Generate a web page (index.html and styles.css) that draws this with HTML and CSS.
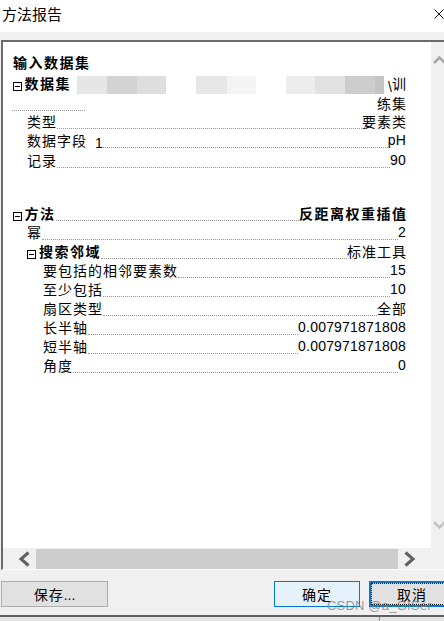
FILE: index.html
```html
<!DOCTYPE html>
<html>
	<head>
		<meta charset="utf-8">
		<link rel="stylesheet" href="styles.css">
	</head>
	<body>
		<div class="titlebar">
			<span class="title">方法报告</span>
			<svg class="close" width="10" height="10" viewBox="0 0 10 10"><path d="M0.5 0.5L9.5 9.5M9.5 0.5L0.5 9.5" stroke="#1a1a1a" stroke-width="1"/></svg>
		</div>
		<div class="band"></div>

		<div class="frame">
			<div class="view">
				<div class="report">
					<div class="row heading">输入数据集</div>

					<div class="dataset">
						<div class="row first">
							<span class="toggle"></span>
							<span class="lbl bold">数据集</span>
							<span class="blur">
								<i style="width:30px;background:#e6e6e6"></i>
								<i style="width:30px;background:#d3d3d3"></i>
								<i style="width:29px;background:#dedede"></i>
								<i style="width:30px;background:#fff"></i>
								<i style="width:31px;background:#e7e7e7"></i>
								<i style="width:29px;background:#f4f4f4"></i>
								<i style="width:30px;background:#fff"></i>
								<i style="width:29px;background:#ededed"></i>
								<i style="width:30px;background:#e2e2e2"></i>
								<i style="width:30px;background:#cdcdcd"></i>
								<i style="width:9px;background:#c4c4c4"></i>
							</span>
							<span class="fill"></span>
							<span class="val"><span class="num">\</span>训</span>
						</div>
						<div class="row second">
							<span class="stub"></span>
							<span class="fill"></span>
							<span class="val">练集</span>
						</div>
					</div>

					<div class="row l1"><span class="lbl">类型</span><span class="dots"></span><span class="val">要素类</span></div>
					<div class="row l1"><span class="lbl">数据字段<span class="num one">1</span></span><span class="dots"></span><span class="val num">pH</span></div>
					<div class="row l1"><span class="lbl">记录</span><span class="dots"></span><span class="val num">90</span></div>

					<div class="sec2">
						<div class="row"><span class="toggle"></span><span class="lbl bold">方法</span><span class="dots"></span><span class="val bold">反距离权重插值</span></div>
						<div class="row l1"><span class="lbl">幂</span><span class="dots"></span><span class="val num">2</span></div>
						<div class="row l1t"><span class="toggle"></span><span class="lbl bold">搜索邻域</span><span class="dots"></span><span class="val">标准工具</span></div>
						<div class="row l2"><span class="lbl">要包括的相邻要素数</span><span class="dots"></span><span class="val num">15</span></div>
						<div class="row l2"><span class="lbl">至少包括</span><span class="dots"></span><span class="val num">10</span></div>
						<div class="row l2"><span class="lbl">扇区类型</span><span class="dots"></span><span class="val">全部</span></div>
						<div class="row l2"><span class="lbl">长半轴</span><span class="dots"></span><span class="val num">0.007971871808</span></div>
						<div class="row l2"><span class="lbl">短半轴</span><span class="dots"></span><span class="val num">0.007971871808</span></div>
						<div class="row l2"><span class="lbl">角度</span><span class="dots"></span><span class="val num">0</span></div>
					</div>
				</div>

				<div class="vscroll">
					<svg width="13" height="12" viewBox="0 0 13 12"><polyline points="3,9 8.5,3.5 14,9" fill="none" stroke="#a8a8a8" stroke-width="2.5"/></svg>
					<svg width="13" height="12" viewBox="0 0 13 12"><polyline points="3,3 8.5,8.5 14,3" fill="none" stroke="#c4c4c4" stroke-width="2.5"/></svg>
				</div>
			</div>

			<div class="hscroll">
				<span class="arrow left">
					<svg width="14" height="16" viewBox="0 0 14 16"><polyline points="11.5,1.5 4,8 11.5,14.5" fill="none" stroke="#606060" stroke-width="3"/></svg>
				</span>
				<span class="thumb"></span>
				<span class="arrow right">
					<svg width="14" height="16" viewBox="0 0 14 16"><polyline points="2.5,1.5 10,8 2.5,14.5" fill="none" stroke="#606060" stroke-width="3"/></svg>
				</span>
				<span class="corner"></span>
			</div>
		</div>

		<div class="buttons">
			<button class="btn save">保存<span class="num">...</span></button>
			<span class="fill"></span>
			<button class="btn ok">确定</button>
			<button class="btn cancel">取消</button>
		</div>
		<div class="bottom"><span class="sep"></span></div>

		<div class="watermark">CSDN @a_GISer</div>
	</body>
</html>
```

FILE: styles.css
```css
html, body {
	margin: 0;
	padding: 0;
}

body {
	width: 444px;
	height: 621px;
	overflow: hidden;
	position: relative;
	background-color: #f0f0f0;
	font-family: "Noto Sans CJK SC", "Liberation Sans", sans-serif;
	font-size: 14px;
	color: #000;
}

.titlebar {
	height: 32px;
	box-sizing: border-box;
	padding: 0 0 6px 2px;
	background-color: #fff;
	display: flex;
	align-items: center;
	justify-content: space-between;
}

.title {
	font-size: 15px;
	line-height: 15px;
}

.close {
	margin-right: 0;
	margin-top: 2px;
}

.band {
	height: 8px;
}

.frame {
	margin-left: 1px;
	border-top: 2px solid #6a6a6a;
	border-left: 2px solid #6a6a6a;
	border-bottom: 1px solid #fbfbfb;
}

.view {
	display: flex;
	height: 506px;
}

.report {
	flex: 1;
	background-color: #fff;
	padding: 11px 25px 0 10px;
	overflow: hidden;
}

.vscroll {
	width: 13px;
	display: flex;
	flex-direction: column;
	justify-content: space-between;
	padding: 12px 0 17px 0;
	overflow: hidden;
}

/* rows */
.row {
	display: flex;
	align-items: flex-start;
	height: 19.4px;
	line-height: 19.4px;
	white-space: nowrap;
}

.sec2 {
	margin-top: 34px;
}

.sec2 .row {
	height: 19px;
	line-height: 19px;
}

.heading {
	height: 21.3px;
	font-weight: 700;
	letter-spacing: 1.5px;
}

.dataset .first {
	height: 19.5px;
	line-height: 19.5px;
}

.dataset .second {
	height: 18.2px;
	line-height: 18.2px;
}

.l1 {
	padding-left: 14px;
}

.l1t {
	padding-left: 14.5px;
}

.l2 {
	padding-left: 30px;
}

.lbl {
	letter-spacing: 1px;
}

.bold {
	font-weight: 700;
	letter-spacing: 1.5px;
}

.toggle {
	flex: none;
	position: relative;
	width: 9px;
	height: 9px;
	box-sizing: border-box;
	border: 1px solid #000;
	margin: 8px 3px 0 -0.5px;
}

.toggle::after {
	content: "";
	position: absolute;
	left: 1px;
	right: 1px;
	top: 3px;
	height: 1px;
	background-color: #000;
}

.dots {
	flex: 1;
	min-width: 0;
	height: 16px;
	border-bottom: 1px dotted #9a9a9a;
}

.fill {
	flex: 1;
}

.val {
	letter-spacing: 1px;
	margin-right: -1px;
}

.val.bold {
	letter-spacing: 1.5px;
	margin-right: -1.5px;
}

.num {
	font-family: "Liberation Sans", sans-serif;
	letter-spacing: 0.2px;
	vertical-align: -2.5px;
}

.val.num {
	margin-right: 0;
}

.one {
	margin-left: 8px;
	vertical-align: -1.5px;
}

.blur {
	display: flex;
	margin: 1.5px 0 0 5.5px;
	height: 18px;
}

.blur i {
	display: block;
	height: 18px;
}

.stub {
	width: 73px;
	height: 16px;
	margin-left: -1px;
	border-bottom: 1px dotted #9a9a9a;
}

/* horizontal scroll bar */
.hscroll {
	height: 21px;
	display: flex;
	align-items: flex-start;
}

.arrow {
	width: 33px;
	height: 21px;
	display: flex;
	align-items: center;
}

.arrow.left {
	justify-content: flex-end;
	padding-right: 5px;
	box-sizing: border-box;
}

.arrow.right {
	padding-left: 5px;
	box-sizing: border-box;
}

.thumb {
	width: 362px;
	height: 20px;
	margin-top: 1px;
	background-color: #cdcdcd;
}

.corner {
	flex: 1;
}

/* buttons */
.buttons {
	height: 45px;
	box-sizing: border-box;
	padding: 11px 0 0 1px;
	display: flex;
	align-items: flex-start;
}

.btn {
	flex: none;
	height: 26px;
	padding: 0;
	font-family: "Noto Sans CJK SC", sans-serif;
	font-size: 14px;
	color: #000;
	background-color: #e1e1e1;
	border: 1px solid #adadad;
	border-radius: 0;
	letter-spacing: 1px;
}

.btn .num {
	vertical-align: 0;
	letter-spacing: 0;
}

.save {
	width: 107px;
}

.ok {
	width: 86px;
	background-color: #e5f1fb;
	border-color: #0078d7;
}

.cancel {
	position: relative;
	width: 86px;
	margin: 0 -11px 0 9px;
	border: 2px solid #0078d7;
}

.cancel::after {
	content: "";
	position: absolute;
	left: 0;
	top: 0;
	right: 0;
	bottom: 0;
	border: 1px dotted #000;
}

.bottom {
	height: 6px;
	box-sizing: border-box;
	border-top: 2px solid #5f5f5f;
	background-color: #e4e4e4;
	position: relative;
}

.sep {
	position: absolute;
	left: 379px;
	top: 0;
	width: 1px;
	height: 4px;
	background-color: #8a8a8a;
}

.watermark {
	position: absolute;
	left: 327px;
	top: 598px;
	font-family: "Liberation Sans", sans-serif;
	font-size: 13px;
	color: rgba(120, 120, 120, 0.75);
	letter-spacing: 0.2px;
}
```
